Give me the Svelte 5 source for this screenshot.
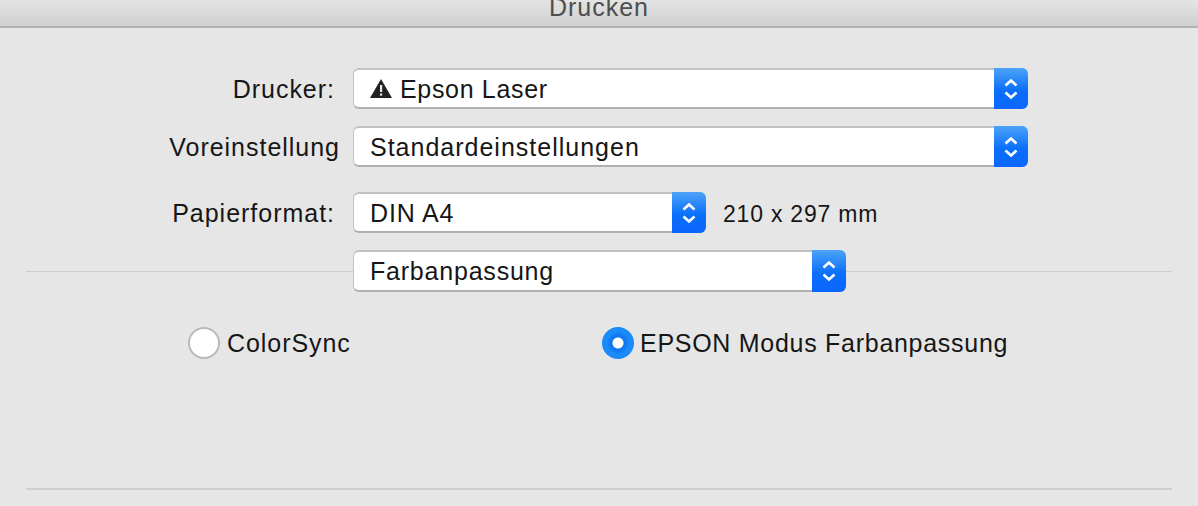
<script lang="ts">
  interface Row {
    label: string;
    value: string;
    tracking: number;
    warn?: boolean;
    wide: boolean;
    note?: string;
  }

  // tracking per value, the original face runs a little wider than Liberation
  const rows: Row[] = [
    { label: 'Drucker:', value: 'Epson Laser', tracking: 0.67, warn: true, wide: true },
    { label: 'Voreinstellung', value: 'Standardeinstellungen', tracking: 1, wide: true },
    { label: 'Papierformat:', value: 'DIN A4', tracking: 0.85, wide: false, note: '210 x 297 mm' },
  ];
</script>

{#snippet stepper()}
  <span class="stepper">
    <svg width="14" height="24" viewBox="0 0 14 24" fill="none" stroke="#fff" stroke-width="2.6">
      <path d="M1.5 8.500 7 3.500l5.500 5" />
      <path d="M1.500 15.500 7 20.500l5.500-5" />
    </svg>
  </span>
{/snippet}

<div class="sheet">
  <header class="titlebar"><span class="title">Drucken</span></header>

  <div class="form">
    {#each rows as row}
      <div class="row" class:row-paper={row.note}>
        <span class="label" class:label-over={row.label === 'Voreinstellung'}>{row.label}</span>
        <div class="popup" class:popup-wide={row.wide} class:popup-paper={!row.wide}>
          <span class="popup-text row-text" style:letter-spacing="{row.tracking}px">
            {#if row.warn}
              <svg class="warn" width="22" height="19" viewBox="0 0 22 19">
                <path d="M11 0 22 19H0Z" fill="#222" />
                <rect x="10" y="6" width="2.200" height="7" fill="#e8e8e8" />
                <rect x="10" y="14.500" width="2.200" height="2.200" fill="#e8e8e8" />
              </svg>
            {/if}
            {row.value}
          </span>
          {@render stepper()}
        </div>
        {#if row.note}<span class="note">{row.note}</span>{/if}
      </div>
    {/each}
  </div>

  <div class="divider-row">
    <span class="line line-left"></span>
    <div class="popup popup-mid">
      <span class="popup-text mid-text">Farbanpassung</span>
      {@render stepper()}
    </div>
    <span class="line line-right"></span>
  </div>

  <div class="radios">
    <label class="radio radio-a"><span class="dot"></span>ColorSync</label>
    <label class="radio radio-b"><span class="dot dot-on"></span>EPSON Modus Farbanpassung</label>
  </div>

  <div class="bottom-line"></div>
</div>

<style>
  :global(body) {
    margin: 0;
    background: #e6e6e6;
  }
  .sheet {
    width: 1198px;
    height: 506px;
    overflow: hidden;
    background: #e6e6e6;
    font-family: "Liberation Sans", Arial, sans-serif;
    font-size: 25px;
    letter-spacing: 0.98px;
    color: #161616;
  }
  .titlebar {
    height: 26px;
    overflow: hidden;
    display: flex;
    justify-content: center;
    background: linear-gradient(#e4e4e4, #cfcfcf);
    border-bottom: 2px solid #b2b2b2;
  }
  .title {
    margin-top: -7px;
    line-height: 28px;
    color: #4e4e4e;
  }
  .form {
    padding-top: 40px;
    display: flex;
    flex-direction: column;
    gap: 17px;
  }
  .row {
    height: 41px;
    display: flex;
    align-items: center;
  }
  .row-paper {
    margin-top: 8px;
  }
  .label {
    width: 335px;
    flex: none;
    padding-top: 2px;
    text-align: right;
    white-space: nowrap;
  }
  .label-over {
    width: 340px;
    margin-right: -5px;
  }
  .popup {
    height: 41px;
    box-sizing: border-box;
    display: flex;
    align-items: stretch;
    margin-left: 18px;
    background: #fff;
    border-radius: 6px;
    border: 1px solid #c4c4c4;
    border-top: 2px solid #c2c2c2;
    border-bottom: 2px solid #b0b0b0;
    border-right: none;
    flex: none;
  }
  .popup-wide { width: 675px; }
  .popup-paper { width: 353px; }
  .popup-mid { width: 493px; height: 42px; margin-left: 0; }
  .popup-text {
    flex: 1;
    display: flex;
    align-items: center;
    gap: 8px;
    padding-left: 16px;
    white-space: nowrap;
  }
  .row-text { padding-top: 2px; }
  .warn { margin-top: -2px; }
  .mid-text { letter-spacing: 0.79px; }
  .stepper {
    width: 34px;
    margin: -2px 0;
    border-radius: 0 6px 6px 0;
    background: linear-gradient(#4da3f7, #0a6ffb 55%, #0b66fc);
    display: flex;
    align-items: center;
    justify-content: center;
  }
  .note {
    margin: 3px 0 0 17px;
    font-size: 23px;
    letter-spacing: 0.78px;
  }
  .divider-row {
    margin-top: 17px;
    height: 42px;
    padding: 0 26px;
    display: flex;
    align-items: center;
  }
  .line {
    height: 1px;
    background: #cdcdcd;
  }
  .line-left { width: 327px; flex: none; }
  .line-right { flex: 1; }
  .radios {
    margin-top: 35px;
    height: 32px;
    display: flex;
    align-items: center;
  }
  .radio {
    display: flex;
    align-items: center;
    white-space: nowrap;
  }
  .radio-a { margin-left: 188px; width: 414px; gap: 7px; letter-spacing: 0.93px; }
  .radio-b { gap: 6px; letter-spacing: 0.72px; }
  .dot {
    width: 32px;
    height: 32px;
    box-sizing: border-box;
    border-radius: 50%;
    background: #fff;
    border: 2px solid #b9b9b9;
    flex: none;
  }
  .dot-on {
    background: radial-gradient(circle, #fff 0 5px, #0f78f2 6px 8px, #1a8bf8 11px);
    border: none;
  }
  .bottom-line {
    margin: 129px 26px 0;
    height: 2px;
    background: #cfcfcf;
  }
</style>
